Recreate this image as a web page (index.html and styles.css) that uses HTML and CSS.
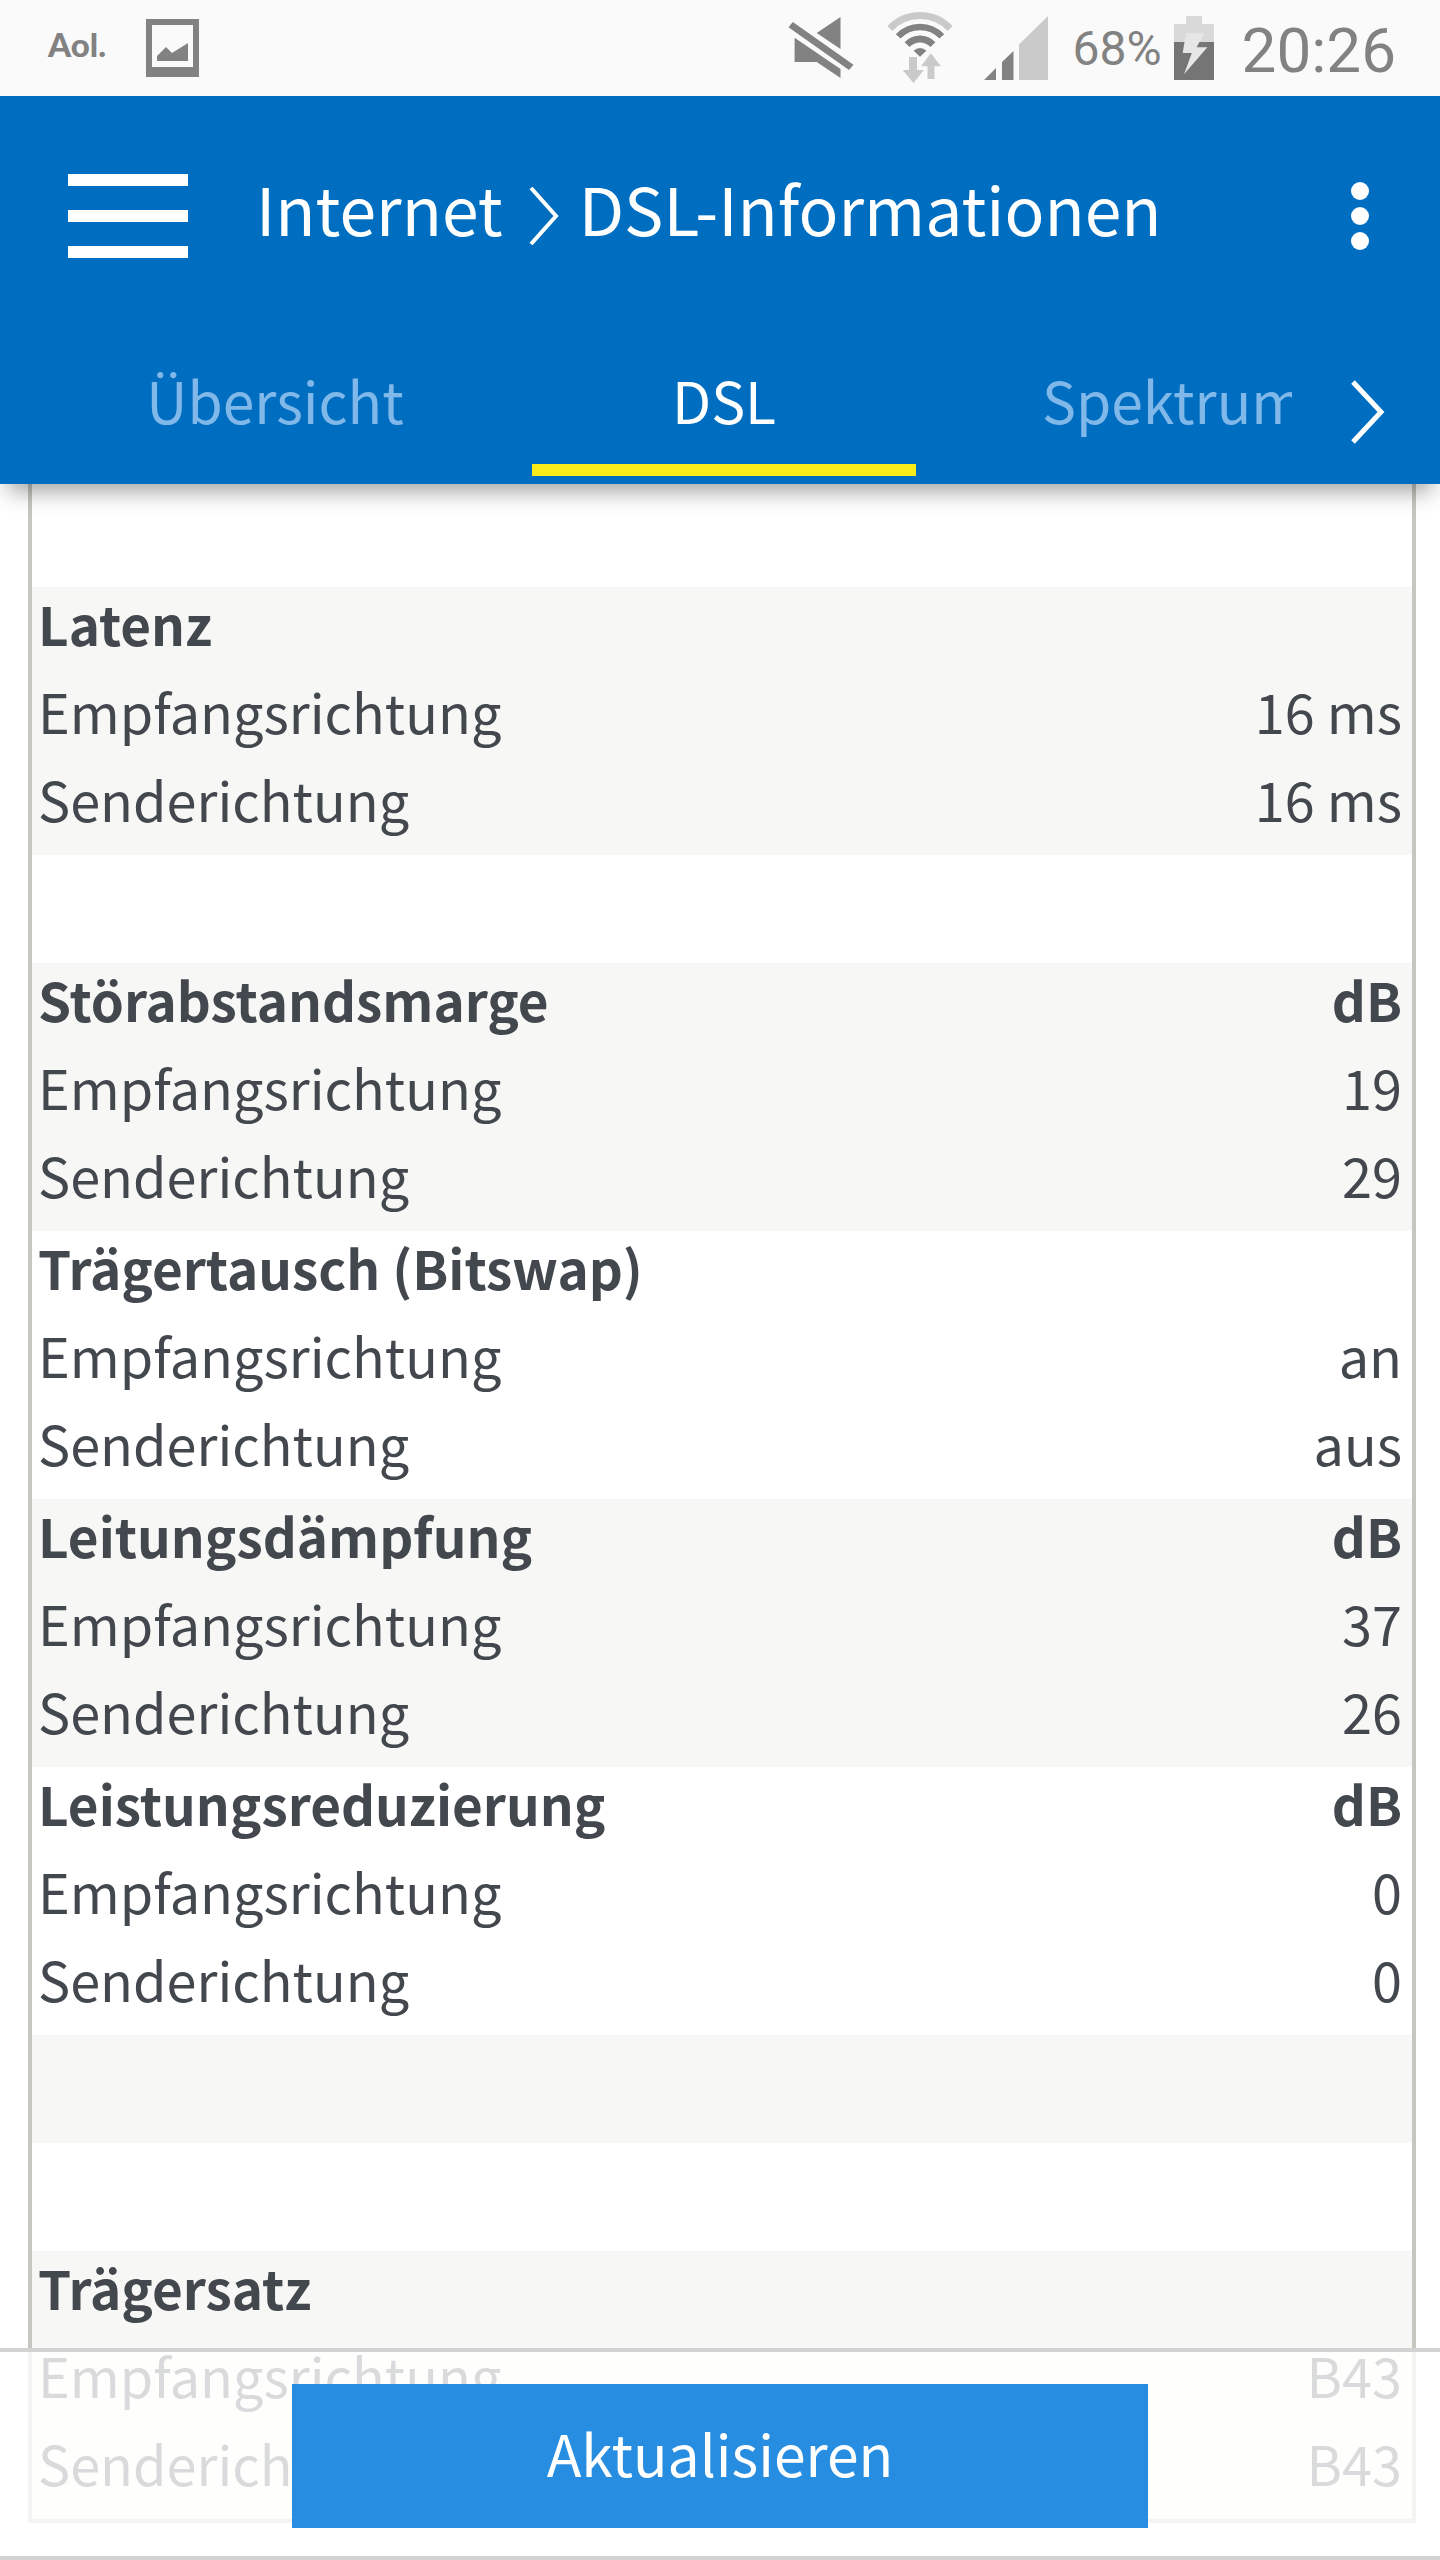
FILE: index.html
```html
<!DOCTYPE html>
<html lang="de">
<head>
<meta charset="utf-8">
<meta name="viewport" content="width=device-width, initial-scale=1">
<title>DSL-Informationen</title>
<link rel="stylesheet" href="styles.css">
</head>
<body>
<header class="top">
  <div class="status">
    <span class="status-app">Aol.</span>
    <svg class="status-picture" width="53" height="58" viewBox="0 0 53 58" aria-hidden="true">
      <path fill="#828282" fill-rule="evenodd" d="M0 0H53V58H0ZM6 6V48H47V6Z"/>
      <path fill="#828282" d="M11 42V37L20 28L26 34L42 24V42Z"/>
    </svg>
    <span class="status-space"></span>
    <svg class="status-mute" width="66" height="64" viewBox="0 0 66 64" aria-hidden="true">
      <path fill="#828282" d="M52.500 1V33L28.700 17ZM6.600 21.700L52.500 53V62L28.700 46H6.600ZM4.800 6L65.500 48.700L61 54L.500 11.300Z"/>
    </svg>
    <svg class="status-wifi" width="68" height="72" viewBox="0 0 68 72" aria-hidden="true">
      <g fill="none">
        <path stroke="#cacaca" stroke-width="7" d="M3.900 16.600A41.200 41.200 0 0 1 64.100 16.600"/>
        <path stroke="#828282" stroke-width="6.500" d="M12.200 24.400A29.800 29.800 0 0 1 55.800 24.400"/>
        <path stroke="#828282" stroke-width="6.800" d="M21.100 32.600A17.700 17.700 0 0 1 46.900 32.600"/>
      </g>
      <path fill="#828282" d="M34 44.700L27.600 38.800A8.700 8.700 0 0 1 40.400 38.800Z"/>
      <path fill="#cacaca" d="M23 45H31V58H38L27.500 71L16.500 58H23ZM44.800 41.300L55 54.300H48.500V67H41.500V54.300H35Z"/>
    </svg>
    <svg class="status-signal" width="64" height="64" viewBox="0 0 64 64" aria-hidden="true">
      <path fill="#828282" d="M0 64L12 52V64ZM18 64V46L29.500 35V64Z"/>
      <path fill="#cacaca" d="M35 64V28.500L64 0V64Z"/>
    </svg>
    <span class="status-percent">68%</span>
    <svg class="status-battery" width="40" height="64" viewBox="0 0 40 64" aria-hidden="true">
      <path fill="#d9d9d9" d="M12 0H28V8H40V26H0V8H12Z"/>
      <path fill="#757575" d="M0 26H40V64H0Z"/>
      <path fill="#e6e6e6" d="M12 17.300H30.400L22.600 31.300H33.400L10 58.300L17.800 37H8.700Z"/>
    </svg>
    <time class="status-clock">20:26</time>
  </div>

  <div class="appbar">
    <button class="icon-button menu" type="button" aria-label="Menü">
      <svg width="120" height="84" viewBox="0 0 120 84"><path fill="#fff" d="M0 0H120V12H0ZM0 36H120V48H0ZM0 72H120V84H0Z"/></svg>
    </button>
    <h1 class="crumbs">
      <a class="crumb" href="#">Internet</a>
      <svg class="crumb-arrow" width="30" height="58" viewBox="0 0 30 58" aria-hidden="true"><path fill="none" stroke="#fff" stroke-width="4" d="M2 1L27 29L2 57"/></svg>
      <span class="crumb">DSL-Informationen</span>
    </h1>
    <button class="icon-button more" type="button" aria-label="Mehr">
      <svg width="18" height="68" viewBox="0 0 18 68"><g fill="#fff"><circle cx="9" cy="9" r="9"/><circle cx="9" cy="34" r="9"/><circle cx="9" cy="59" r="9"/></g></svg>
    </button>
  </div>

  <nav class="tabs">
    <div class="tab-list">
      <a class="tab" href="#">Übersicht</a>
      <a class="tab tab-active" href="#" aria-current="page">DSL</a>
      <a class="tab" href="#">Spektrum</a>
    </div>
    <button class="icon-button next" type="button" aria-label="Weiter">
      <svg width="34" height="64" viewBox="0 0 34 64"><path fill="none" stroke="#fff" stroke-width="5" d="M2 2L30 32L2 62"/></svg>
    </button>
  </nav>
</header>

<main class="content">
  <table class="values">
    <tbody><tr class="spacer first"><td colspan="2"></td></tr></tbody>
    <tbody>
      <tr><th colspan="2">Latenz</th></tr>
      <tr><td>Empfangsrichtung</td><td>16 ms</td></tr>
      <tr><td>Senderichtung</td><td>16 ms</td></tr>
    </tbody>
    <tbody><tr class="spacer"><td colspan="2"></td></tr></tbody>
    <tbody>
      <tr><th>Störabstandsmarge</th><th>dB</th></tr>
      <tr><td>Empfangsrichtung</td><td>19</td></tr>
      <tr><td>Senderichtung</td><td>29</td></tr>
    </tbody>
    <tbody>
      <tr><th colspan="2">Trägertausch (Bitswap)</th></tr>
      <tr><td>Empfangsrichtung</td><td>an</td></tr>
      <tr><td>Senderichtung</td><td>aus</td></tr>
    </tbody>
    <tbody>
      <tr><th>Leitungsdämpfung</th><th>dB</th></tr>
      <tr><td>Empfangsrichtung</td><td>37</td></tr>
      <tr><td>Senderichtung</td><td>26</td></tr>
    </tbody>
    <tbody>
      <tr><th>Leistungsreduzierung</th><th>dB</th></tr>
      <tr><td>Empfangsrichtung</td><td>0</td></tr>
      <tr><td>Senderichtung</td><td>0</td></tr>
    </tbody>
    <tbody><tr class="spacer"><td colspan="2"></td></tr></tbody>
    <tbody><tr class="spacer"><td colspan="2"></td></tr></tbody>
    <tbody>
      <tr><th colspan="2">Trägersatz</th></tr>
      <tr><td>Empfangsrichtung</td><td>B43</td></tr>
      <tr><td>Senderichtung</td><td>B43</td></tr>
    </tbody>
  </table>
</main>

<footer class="actions">
  <button class="refresh" type="button">Aktualisieren</button>
</footer>
</body>
</html>
```
FILE: styles.css
```css
* {
  box-sizing: border-box;
}

body {
  margin: 0;
  background: #fff;
  color: #43474e;
  font-family: "Noto Sans CJK SC", "Noto Sans", sans-serif;
  font-size: 54px;
}

a {
  color: inherit;
  text-decoration: none;
}

svg {
  display: block;
  flex: none;
}

.top {
  position: sticky;
  top: 0;
  z-index: 1;
  background: #006ec0;
  color: #fff;
  box-shadow: 0 16px 20px -8px rgba(0, 0, 0, 0.35);
}

/* Status bar */
.status {
  display: flex;
  align-items: center;
  height: 96px;
  padding: 0 44px 0 48px;
  background: #fafafa;
  color: #828282;
  font-family: Roboto, sans-serif;
}

.status-app {
  padding-bottom: 8px;
  font-family: Lato, sans-serif;
  font-size: 33px;
  font-weight: 900;
}

.status-picture {
  margin-left: 40px;
}

.status-space {
  flex: 1;
}

.status-wifi {
  margin-left: 32px;
}

.status-signal {
  margin-left: 30px;
}

.status-percent {
  margin-left: 24px;
  font-size: 48px;
}

.status-battery {
  margin-left: 12px;
}

.status-clock {
  margin-left: 28px;
  padding-top: 4px;
  font-size: 62px;
}

/* App bar */
.icon-button {
  display: flex;
  align-items: center;
  justify-content: center;
  flex: none;
  padding: 0;
  border: 0;
  background: none;
  cursor: pointer;
}

.appbar {
  display: flex;
  align-items: stretch;
  height: 240px;
}

.menu {
  width: 256px;
}

.crumbs {
  display: flex;
  flex: 1;
  align-items: center;
  gap: 20px;
  margin: 0;
  font-size: 66px;
  font-weight: 400;
  white-space: nowrap;
}

.crumb {
  padding-bottom: 18px;
}

.crumb-arrow {
  margin-left: 6px;
}

.more {
  width: 160px;
}

/* Tabs */
.tabs {
  display: flex;
  padding-bottom: 8px;
}

.tab-list {
  display: flex;
  flex: 1;
  gap: 65px;
  min-width: 0;
  padding-left: 83px;
  overflow: hidden;
}

.tab {
  flex: none;
  width: 384px;
  padding-bottom: 2px;
  border-bottom: 12px solid transparent;
  color: #80b9e9;
  font-size: 57px;
  line-height: 126px;
  text-align: center;
}

.tab-active {
  border-color: #faec18;
  color: #fff;
}

.next {
  width: 148px;
  padding: 12px 0 0 4px;
}

/* Values */
.content {
  padding: 0 24px 37px 28px;
}

.values {
  width: 100%;
  border: 4px solid #c6c7c0;
  border-top: 0;
  border-spacing: 0;
}

.values tbody:nth-child(even) {
  background: #f7f7f5;
}

.values th,
.values td {
  padding: 0 10px 20px 6px;
  font-weight: 400;
  line-height: 68px;
  text-align: left;
}

.values th {
  padding-top: 2px;
  font-size: 53px;
  font-weight: 700;
}

.values tr:last-child td {
  padding-bottom: 22px;
}

.values th + th,
.values td + td {
  text-align: right;
}

.values .spacer td {
  height: 108px;
  padding: 0;
}

.values .first td {
  height: 103px;
}

/* Bottom bar */
.actions {
  position: fixed;
  right: 0;
  bottom: 0;
  left: 0;
  display: flex;
  justify-content: center;
  padding: 32px 0 28px;
  border-top: 4px solid #d3d3d3;
  border-bottom: 4px solid #d3d3d3;
  background: rgba(255, 255, 255, 0.8);
}

.refresh {
  width: 856px;
  max-width: 100%;
  padding: 24px 0 32px;
  border: 0;
  background: #268de0;
  color: #fff;
  font-family: inherit;
  font-size: 57px;
  line-height: 88px;
  cursor: pointer;
}
```
